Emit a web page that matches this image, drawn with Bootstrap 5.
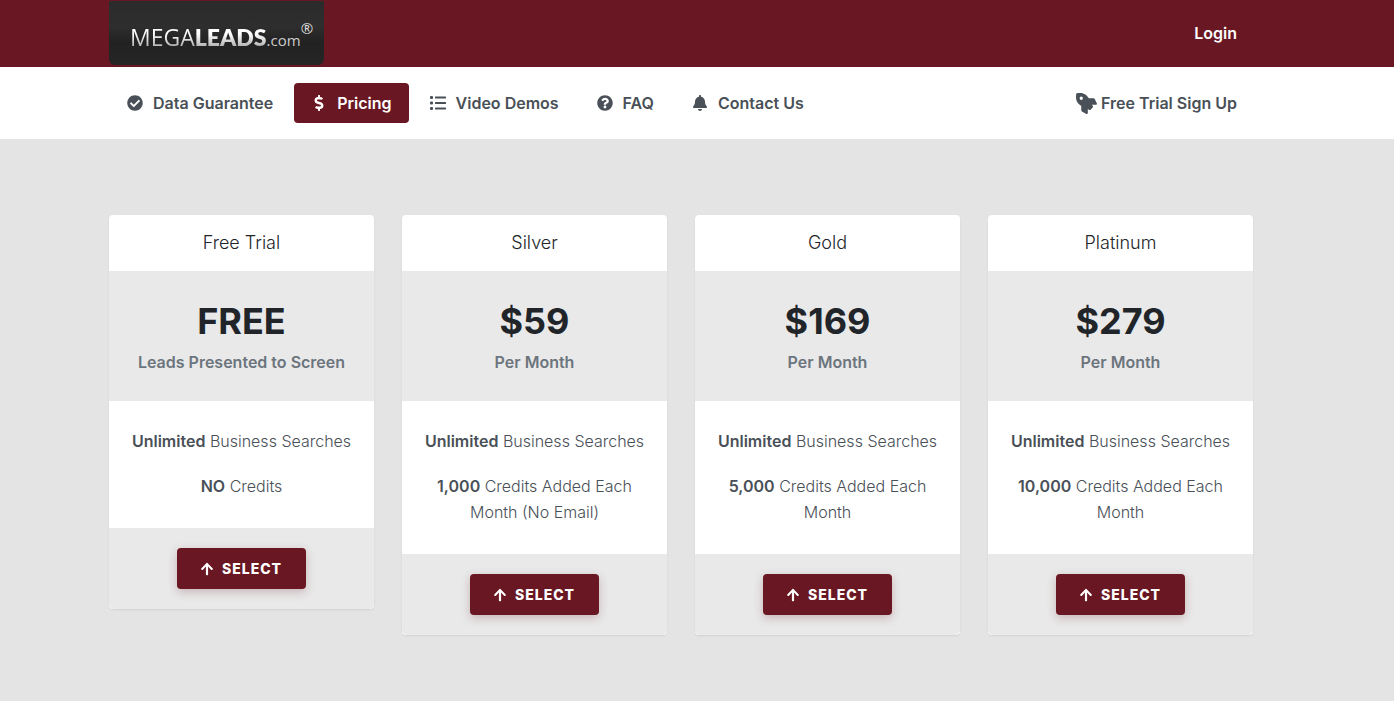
<!DOCTYPE html>
<html lang="en">
<head>
<meta charset="utf-8">
<meta name="viewport" content="width=device-width, initial-scale=1">
<title>MegaLeads.com Pricing</title>
<link rel="stylesheet" href="https://cdn.jsdelivr.net/npm/bootstrap@5.3.0/dist/css/bootstrap.min.css">
<style>
:root { --brand: #691722; --ink: #495057; }
body { font-family: Inter, "Liberation Sans", sans-serif; font-weight: 300; line-height: 26px; color: var(--ink); background: #e4e4e4; padding-right: 32px; }
/* full-bleed bars reach past the body gutter */
.bleed { margin-right: -32px; padding-right: 32px; }
.shell { max-width: 1172px; padding: 0 14px; margin: 0 auto; width: 100%; }
.topbar { background: var(--brand); }
.topbar a { color: #fff; }
.topbar .shell { min-height: 67px; padding-bottom: 1px; }
.menubar { background: #fff; }
.menubar .shell { min-height: 72px; }
.plain-link { font-weight: 600; text-decoration: none; color: var(--ink); padding-right: 16px; line-height: 24px; }
.logo { width: 215px; height: 64px; border-radius: 0 0 6px 6px; background: linear-gradient(#2b2b2b, #2e2e2e 40%, #222 65%, #262626); text-decoration: none; padding: 4px 0 0 21px; font-family: "Open Sans", sans-serif; white-space: nowrap; line-height: 64px; }
.logo .metal { font-size: 23px; font-weight: 400; background: linear-gradient(#fff 40%, #bbb 75%); -webkit-background-clip: text; background-clip: text; color: transparent; }
.logo b { font-family: "Liberation Sans Narrow", Lato, sans-serif; font-weight: 800; }
.logo .tld { font-size: 15px; color: #ccc; font-weight: 400; }
.logo sup { font-size: 15px; color: #ddd; top: -12px; line-height: 0; font-weight: 400; }
.menu-nav { gap: 4px; padding-left: 1px; }
.menu-nav .nav-link { display: flex; align-items: center; gap: 10px; padding: 8px 17px; line-height: 24px; font-weight: 600; color: var(--ink); border-radius: 4px; }
.menu-nav .nav-link.active { background: var(--brand); color: #fff; }
.ico { width: 16px; height: 16px; fill: currentColor; flex: none; }
.ico-rocket { width: 21px; height: 21px; transform: rotate(-90deg); }
.plans { padding: 76px 0 66px; }
.plan-row { --bs-gutter-x: 28px; }
.plan { border: 0; border-radius: 4px; overflow: hidden; text-align: center; box-shadow: 0 1px 2px rgba(0,0,0,.08); }
.plan .card-header { background: #fff; border: 0; padding: 15px; font-size: 18px; color: #212529; }
.plan h2 { font-size: 18px; font-weight: 300; line-height: 26px; margin: 0; }
.price-band { background: #e9e9e9; padding: 30px 14px 26px; }
.price { font-size: 36px; font-weight: 700; line-height: 40px; color: #212529; margin: 0 0 8px; }
.per { font-weight: 600; color: #6c757d; line-height: 26px; margin: 0; }
.plan .card-body { padding: 27px 14px 29px; }
.plan .card-body p { margin: 0 0 19px; }
.plan .card-body p:last-child { margin: 0; }
.plan strong { font-weight: 600; }
.plan .card-footer { background: #e9e9e9; border: 0; padding: 20px; }
.btn-select { --bs-btn-color: #fff; --bs-btn-bg: var(--brand); --bs-btn-hover-color: #fff; --bs-btn-hover-bg: #50111a; --bs-btn-border-width: 0; --bs-btn-border-radius: 4px; font-size: 14px; font-weight: 800; line-height: 21px; letter-spacing: 1px; padding: 10px 24px 10px 23px; box-shadow: 0 3px 10px rgba(105,23,34,.25); }
.btn-select .ico { width: 14px; height: 14px; }
</style>
</head>
<body>
<svg class="d-none" aria-hidden="true">
<symbol id="i-check" viewBox="0 0 512 512"><path d="M504 256c0 136.967-111.033 248-248 248S8 392.967 8 256 119.033 8 256 8s248 111.033 248 248zM227.314 387.314l184-184c6.248-6.248 6.248-16.379 0-22.627l-22.627-22.627c-6.248-6.249-16.379-6.249-22.628 0L216 308.118l-70.059-70.059c-6.248-6.248-16.379-6.248-22.628 0l-22.627 22.627c-6.248 6.248-6.248 16.379 0 22.627l104 104c6.249 6.249 16.379 6.249 22.628.001z"/></symbol>
<symbol id="i-dollar" viewBox="0 0 288 512"><path d="M209.2 233.4l-108-31.6C88.7 198.2 80 186.5 80 173.5c0-16.3 13.2-29.5 29.5-29.5h66.3c12.2 0 24.2 3.7 34.2 10.5 6.1 4.1 14.3 3.1 19.5-2l34.8-34c7.1-6.9 6.1-18.4-1.8-24.5C238 74.8 207.4 64.1 176 64V16c0-8.8-7.2-16-16-16h-32c-8.8 0-16 7.2-16 16v48h-2.5C45.8 64-5.4 118.7.5 183.6c4.2 46.1 39.4 83.6 83.8 96.6l102.5 30c12.5 3.7 21.2 15.3 21.2 28.3 0 16.3-13.2 29.5-29.5 29.5h-66.3C100 368 88 364.3 78 357.5c-6.1-4.1-14.3-3.1-19.5 2l-34.8 34c-7.1 6.9-6.1 18.4 1.8 24.5 24.5 19.2 55.1 29.9 86.5 30v48c0 8.8 7.2 16 16 16h32c8.8 0 16-7.2 16-16v-48.2c46.6-.9 90.3-28.6 105.7-72.7 21.5-61.6-14.6-124.8-72.5-141.7z"/></symbol>
<symbol id="i-list" viewBox="0 0 16 16"><rect x="0" y="1" width="3" height="3" rx="1"/><rect x="0" y="6.5" width="3" height="3" rx="1"/><rect x="0" y="12" width="3" height="3" rx="1"/><rect x="5" y="1.5" width="11" height="2" rx=".5"/><rect x="5" y="7" width="11" height="2" rx=".5"/><rect x="5" y="12.5" width="11" height="2" rx=".5"/></symbol>
<symbol id="i-question" viewBox="0 0 512 512"><path d="M504 256c0 136.997-111.043 248-248 248S8 392.997 8 256C8 119.083 119.043 8 256 8s248 111.083 248 248zM262.655 90c-54.497 0-89.255 22.957-116.549 63.758-3.536 5.286-2.353 12.415 2.715 16.258l34.699 26.31c5.205 3.947 12.621 3.008 16.665-2.122 17.864-22.658 30.113-35.797 57.303-35.797 20.429 0 45.698 13.148 45.698 32.958 0 14.976-12.363 22.667-32.534 33.976C247.128 238.528 216 254.941 216 296v4c0 6.627 5.373 12 12 12h56c6.627 0 12-5.373 12-12v-1.333c0-28.462 83.186-29.647 83.186-106.667 0-58.002-60.165-102-116.531-102zM256 338c-25.365 0-46 20.635-46 46 0 25.364 20.635 46 46 46s46-20.636 46-46c0-25.365-20.635-46-46-46z"/></symbol>
<symbol id="i-bell" viewBox="0 0 448 512"><path d="M224 512c35.32 0 63.97-28.65 63.97-64H160.03c0 35.35 28.65 64 63.97 64zm215.39-149.71c-19.32-20.76-55.47-51.99-55.47-154.29 0-77.7-54.48-139.9-127.94-155.16V32c0-17.67-14.32-32-31.98-32s-31.98 14.33-31.98 32v20.84C118.56 68.1 64.08 130.3 64.08 208c0 102.3-36.15 133.53-55.47 154.29-6 6.45-8.66 14.16-8.61 21.71.11 16.4 12.98 32 32.1 32h383.8c19.12 0 32-15.6 32.1-32 .05-7.55-2.61-15.27-8.61-21.71z"/></symbol>
<symbol id="i-rocket" viewBox="0 0 512 512"><path d="M505.12 19.094c-1.19-5.531-6.659-11-12.207-12.188C460.716 0 435.507 0 410.407 0 307.175 0 245.269 55.203 199.052 128H94.838c-16.348.016-35.557 11.875-42.887 26.484L2.516 253.297A28.4 28.4 0 0 0 0 264a24.009 24.009 0 0 0 24.006 24h103.81l-22.474 22.469c-11.366 11.361-12.996 32.258 0 45.25l50.904 50.906c11.156 11.188 32.156 13.156 45.277 0l22.475-22.469V488a24.009 24.009 0 0 0 24.006 24 28.56 28.56 0 0 0 10.707-2.516l98.728-49.39c14.629-7.297 26.508-26.5 26.508-42.86V312.797c72.598-46.313 128.035-108.406 128.035-211.094.093-25.203.093-50.406-6.862-82.609zM384.04 168A40 40 0 1 1 424.05 128a40.023 40.023 0 0 1-40.01 40z"/></symbol>
<symbol id="i-up" viewBox="0 0 448 512"><path d="M34.9 289.5l-22.2-22.2c-9.4-9.4-9.4-24.6 0-33.9L207 39c9.4-9.4 24.6-9.4 33.9 0l194.3 194.3c9.4 9.4 9.4 24.6 0 33.9L413 289.4c-9.5 9.5-25 9.3-34.3-.4L264 168.6V456c0 13.3-10.7 24-24 24h-32c-13.3 0-24-10.7-24-24V168.6L69.2 289.1c-9.3 9.8-24.8 10-34.3.4z"/></symbol>
</svg>

<header>
<div class="topbar bleed">
<div class="shell d-flex align-items-center justify-content-between">
<a class="logo d-block" href="#"><span class="metal">MEGA<b>LEADS</b></span><span class="tld">.com</span><sup>®</sup></a>
<a class="plain-link text-white" href="#">Login</a>
</div>
</div>
<div class="menubar bleed">
<nav class="shell d-flex align-items-center justify-content-between flex-wrap" aria-label="Main">
<ul class="nav menu-nav">
<li class="nav-item"><a class="nav-link" href="#"><svg class="ico"><use href="#i-check"/></svg>Data Guarantee</a></li>
<li class="nav-item"><a class="nav-link active" aria-current="page" href="#"><svg class="ico"><use href="#i-dollar"/></svg>Pricing</a></li>
<li class="nav-item"><a class="nav-link" href="#"><svg class="ico"><use href="#i-list"/></svg>Video Demos</a></li>
<li class="nav-item"><a class="nav-link" href="#"><svg class="ico"><use href="#i-question"/></svg>FAQ</a></li>
<li class="nav-item"><a class="nav-link" href="#"><svg class="ico"><use href="#i-bell"/></svg>Contact Us</a></li>
</ul>
<a class="plain-link d-flex align-items-center gap-1" href="#"><svg class="ico ico-rocket"><use href="#i-rocket"/></svg>Free Trial Sign Up</a>
</nav>
</div>
</header>

<main class="shell">
<div class="plans">
<div class="row row-cols-1 row-cols-sm-2 row-cols-lg-4 gy-4 gy-lg-0 align-items-start plan-row">
<div class="col"><article class="card plan">
<div class="card-header"><h2>Free Trial</h2></div>
<div class="price-band"><p class="price">FREE</p><p class="per">Leads Presented to Screen</p></div>
<div class="card-body"><p><strong>Unlimited</strong> Business Searches</p><p><strong>NO</strong> Credits</p></div>
<div class="card-footer"><button type="button" class="btn btn-select d-inline-flex align-items-center gap-2"><svg class="ico"><use href="#i-up"/></svg>SELECT</button></div>
</article></div>
<div class="col"><article class="card plan">
<div class="card-header"><h2>Silver</h2></div>
<div class="price-band"><p class="price">$59</p><p class="per">Per Month</p></div>
<div class="card-body"><p><strong>Unlimited</strong> Business Searches</p><p><strong>1,000</strong> Credits Added Each Month (No Email)</p></div>
<div class="card-footer"><button type="button" class="btn btn-select d-inline-flex align-items-center gap-2"><svg class="ico"><use href="#i-up"/></svg>SELECT</button></div>
</article></div>
<div class="col"><article class="card plan">
<div class="card-header"><h2>Gold</h2></div>
<div class="price-band"><p class="price">$169</p><p class="per">Per Month</p></div>
<div class="card-body"><p><strong>Unlimited</strong> Business Searches</p><p><strong>5,000</strong> Credits Added Each Month</p></div>
<div class="card-footer"><button type="button" class="btn btn-select d-inline-flex align-items-center gap-2"><svg class="ico"><use href="#i-up"/></svg>SELECT</button></div>
</article></div>
<div class="col"><article class="card plan">
<div class="card-header"><h2>Platinum</h2></div>
<div class="price-band"><p class="price">$279</p><p class="per">Per Month</p></div>
<div class="card-body"><p><strong>Unlimited</strong> Business Searches</p><p><strong>10,000</strong> Credits Added Each Month</p></div>
<div class="card-footer"><button type="button" class="btn btn-select d-inline-flex align-items-center gap-2"><svg class="ico"><use href="#i-up"/></svg>SELECT</button></div>
</article></div>
</div>
</div>
</main>
<script src="https://cdn.jsdelivr.net/npm/bootstrap@5.3.0/dist/js/bootstrap.bundle.min.js"></script>
</body>
</html>
